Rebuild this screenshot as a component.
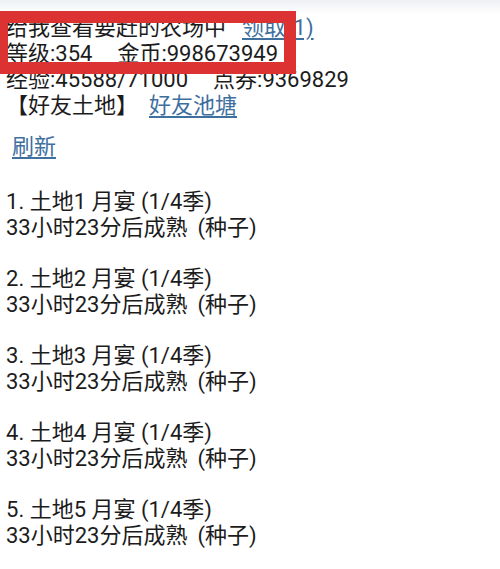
const LINK = 'text-[#3f6f9f] underline underline-offset-[3px] decoration-[1.5px]'

const PLOTS = [1, 2, 3, 4, 5]

export default function App() {
  return (
    <div
      className="relative min-h-[569px] w-[500px] overflow-hidden bg-[linear-gradient(#edf0f3,#ffffff_14px)] pt-[15px] pl-[6px] text-[22px] leading-[26px] text-[#1c1c1c]"
      style={{ fontFamily: 'Roboto, "Noto Sans CJK SC", sans-serif' }}
    >
      <div className="whitespace-nowrap">
        给我查看要赶的农场中<span className={`ml-[16px] ${LINK}`}>领取(1)</span>
      </div>
      <div className="whitespace-nowrap">
        等级:354<span className="ml-[25px]">金币:998673949</span>
      </div>
      <div className="whitespace-nowrap">
        经验:45588/71000<span className="ml-[25px]">点券:9369829</span>
      </div>
      <div className="whitespace-nowrap">
        【好友土地】<span className={`ml-[11px] ${LINK}`}>好友池塘</span>
      </div>
      <div className="mt-[15px] pl-[6px]">
        <span className={LINK}>刷新</span>
      </div>

      <div className="mt-[29px]">
        {PLOTS.map(n => (
          <div key={n} className="mb-[25px] whitespace-nowrap">
            <div>{n}. 土地{n} 月宴 (1/4季)</div>
            <div>33小时23分后成熟<span className="ml-[10px]">(种子)</span></div>
          </div>
        ))}
      </div>

      {/* red annotation box drawn over the top lines */}
      <div className="absolute left-[-4px] top-[11px] h-[63px] w-[300px] border-[12px] border-[#dc3232]" />
    </div>
  )
}
